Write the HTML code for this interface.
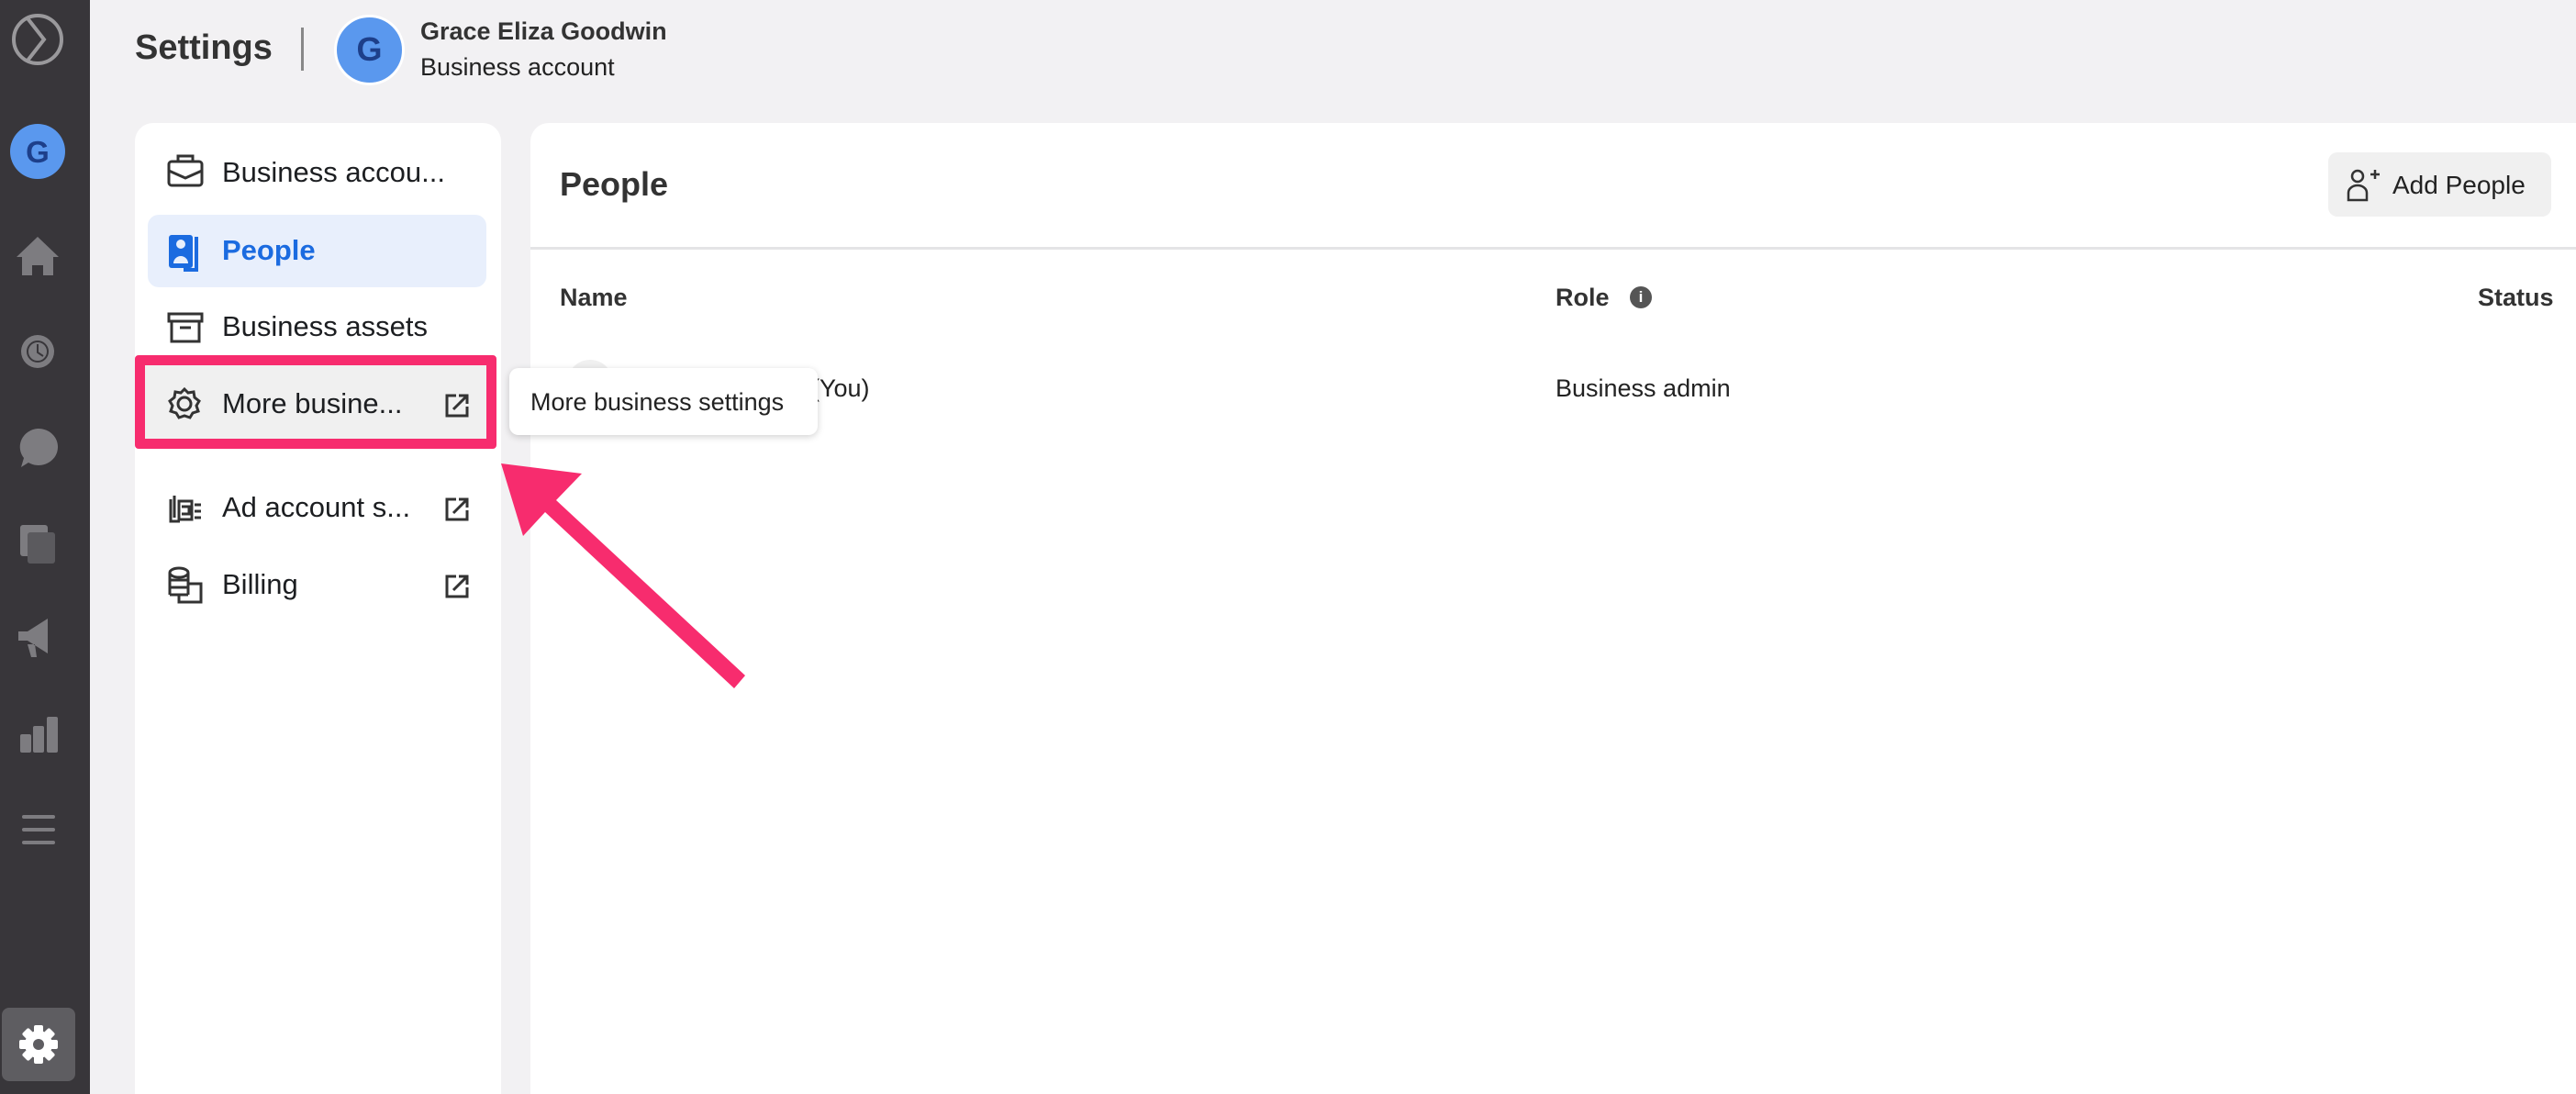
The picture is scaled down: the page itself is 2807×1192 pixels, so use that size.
<!DOCTYPE html>
<html><head><meta charset="utf-8"><style>
*{box-sizing:border-box;margin:0;padding:0}
html,body{width:2807px;height:1192px;overflow:hidden}
body{background:#f2f1f3;font-family:"Liberation Sans",sans-serif;color:#1c1e21;position:relative}
.abs{position:absolute}
.side{left:0;top:0;width:98px;height:1192px;background:#38363a}
.card{background:#fff;border-radius:20px}
.item{position:absolute;left:242px;font-size:31px;color:#1c1e21;transform:translateY(-50%);white-space:nowrap}
</style></head><body>
<div class="abs side"></div>
<svg class="abs" style="left:0;top:0" width="98" height="1192">
<g fill="none" stroke="#9a999c" stroke-width="4">
<circle cx="41" cy="43" r="26"/><path d="M30 20 L48 43 L30 66"/>
</g>
<circle cx="41" cy="165" r="30" fill="#5a98ee"/>
<text x="41" y="177" text-anchor="middle" font-family="Liberation Sans" font-weight="bold" font-size="33" fill="#1d3f8a">G</text>
<g fill="#7d7c80">
<path d="M41 258 L64 280 L58 280 L58 300 L47 300 L47 289 L35 289 L35 300 L24 300 L24 280 L18 280Z"/>
<circle cx="41" cy="383" r="18"/>
<path d="M41 467 a21 20 0 1 1 -10 37 l-8 5 l3 -10 a21 20 0 0 1 15 -32z"/>
<rect x="22" y="572" width="30" height="34" rx="3"/><rect x="30" y="580" width="30" height="34" rx="3" fill="#5b5a5e"/>
<path d="M20 688 h10 l22 -14 v38 l-22 -14 h-10z M30 702 l4 14 h6 l-2 -14z"/>
<rect x="22" y="800" width="12" height="20" rx="2"/><rect x="36" y="791" width="12" height="29" rx="2"/><rect x="51" y="781" width="12" height="39" rx="2"/>
<rect x="24" y="888" width="36" height="4" rx="2"/><rect x="24" y="902" width="36" height="4" rx="2"/><rect x="24" y="916" width="36" height="4" rx="2"/>
</g>
<g stroke="#38363a" stroke-width="2" fill="none"><circle cx="41" cy="383" r="11"/><path d="M41 375v9l6 4"/></g>
<rect x="2" y="1098" width="80" height="80" rx="8" fill="#5e5d61"/>
<g transform="translate(42,1138)" fill="#fff">
<circle r="15"/>
<g id="t"><rect x="-5" y="-21" width="10" height="10" rx="2"/></g>
<use href="#t" transform="rotate(45)"/><use href="#t" transform="rotate(90)"/><use href="#t" transform="rotate(135)"/><use href="#t" transform="rotate(180)"/><use href="#t" transform="rotate(225)"/><use href="#t" transform="rotate(270)"/><use href="#t" transform="rotate(315)"/>
<circle r="6" fill="#5e5d61"/>
</g>
</svg>
<div class="abs" style="left:147px;top:31px;font-size:38px;font-weight:bold;color:#333">Settings</div>
<div class="abs" style="left:328px;top:30px;width:3px;height:47px;background:#888"></div>
<div class="abs" style="left:364px;top:16px;width:77px;height:77px;border-radius:50%;background:#5a98ee;border:3px solid #fff;text-align:center;line-height:70px;font-size:36px;font-weight:bold;color:#1d3f8a">G</div>
<div class="abs" style="left:458px;top:19px;font-size:27px;font-weight:bold;color:#333">Grace Eliza Goodwin</div>
<div class="abs" style="left:458px;top:58px;font-size:27px;color:#222">Business account</div>
<div class="abs card" style="left:147px;top:134px;width:399px;height:1080px"></div>
<div class="abs" style="left:161px;top:234px;width:369px;height:79px;background:#e8effc;border-radius:12px"></div>
<div class="abs" style="left:147px;top:387px;width:394px;height:102px;border:11px solid #f72c6e;border-radius:4px;background:#f0f0f0"></div>
<svg class="abs" style="left:0;top:0" width="600" height="700" fill="none" stroke="#333" stroke-width="3">
<rect x="184" y="176" width="36" height="26" rx="3"/><path d="M194 176v-6h16v6 M184 186l18 8 18-8"/>
<rect x="184" y="342" width="36" height="8"/><rect x="187" y="350" width="30" height="22"/><path d="M196 357h12"/>
<g transform="translate(201,440)"><circle r="7"/><path d="M0 -16 L4 -12 L10 -13 L11 -7 L16 -3 L13 2 L15 8 L9 10 L6 15 L0 13 L-6 15 L-9 10 L-15 8 L-13 2 L-16 -3 L-11 -7 L-10 -13 L-4 -12Z"/></g>
<path d="M190 540v24 M195 546h14v20h-14z M198 552h8v8h-8 M212 550h7 M212 557h7 M212 564h7 M186 544v24h10"/>
<ellipse cx="195" cy="624" rx="10" ry="5"/><path d="M185 624v24 M205 624v24 M185 632h20 M185 640h20 M185 648h20 M205 636h14v20h-24v-8"/>
<g stroke="#333"><path d="M497 431h-10v22h22v-10 M494 446l14-14 M500 431h9v9"/>
<path d="M497 544h-10v22h22v-10 M494 559l14-14 M500 544h9v9"/>
<path d="M497 628h-10v22h22v-10 M494 643l14-14 M500 628h9v9"/></g>
<g stroke="#1b6be0" fill="#1b6be0"><rect x="184" y="256" width="26" height="36" rx="3" stroke="none"/><path d="M214 258v36h-14" fill="none" stroke-width="4"/><circle cx="197" cy="266" r="5" fill="#e8effc" stroke="none"/><path d="M189 287a8 8 0 0 1 16 0z" fill="#e8effc" stroke="none"/></g>
</svg>
<div class="item" style="top:188px">Business accou...</div>
<div class="item" style="top:273px;font-weight:bold;color:#1b6be0">People</div>
<div class="item" style="top:356px">Business assets</div>
<div class="item" style="top:440px">More busine...</div>
<div class="item" style="top:553px">Ad account s...</div>
<div class="item" style="top:637px">Billing</div>
<div class="abs card" style="left:578px;top:134px;width:2260px;height:1080px;border-radius:20px 0 0 0"></div>
<div class="abs" style="left:578px;top:269px;width:2229px;height:3px;background:#e4e4e6"></div>
<div class="abs" style="left:610px;top:180px;font-size:36px;font-weight:bold;color:#333">People</div>
<div class="abs" style="left:2537px;top:166px;width:243px;height:70px;background:#f0f0f0;border-radius:10px"></div>
<svg class="abs" style="left:2555px;top:182px" width="40" height="40" fill="none" stroke="#333" stroke-width="2.5"><circle cx="14" cy="10" r="6"/><path d="M4 36v-8a10 8 0 0 1 20 0v8z M28 8h10 M33 3v10"/></svg>
<div class="abs" style="left:2607px;top:186px;font-size:28px;color:#222">Add People</div>
<div class="abs" style="left:610px;top:309px;font-size:27px;font-weight:bold;color:#333">Name</div>
<div class="abs" style="left:1695px;top:309px;font-size:27px;font-weight:bold;color:#333">Role</div>
<div class="abs" style="left:1776px;top:312px;width:24px;height:24px;border-radius:50%;background:#555;color:#fff;font-size:17px;font-weight:bold;text-align:center;line-height:24px">i</div>
<div class="abs" style="left:2700px;top:309px;font-size:27px;font-weight:bold;color:#333">Status</div>
<div class="abs" style="left:618px;top:392px;width:50px;height:50px;border-radius:50%;background:#f0f0f0"></div>
<div class="abs" style="left:884px;top:408px;font-size:27px;color:#222">(You)</div>
<div class="abs" style="left:1695px;top:408px;font-size:27px;color:#222">Business admin</div>
<div class="abs" style="left:555px;top:401px;width:336px;height:73px;background:#fff;border-radius:10px;box-shadow:0 2px 8px rgba(0,0,0,.18)"></div>
<div class="abs" style="left:578px;top:423px;font-size:27px;color:#222">More business settings</div>
<svg class="abs" style="left:0;top:0" width="900" height="800"><polygon points="546,505 634,516 606,545 812,736 800,750 594,558 570,584" fill="#f72c6e"/></svg>
</body></html>
